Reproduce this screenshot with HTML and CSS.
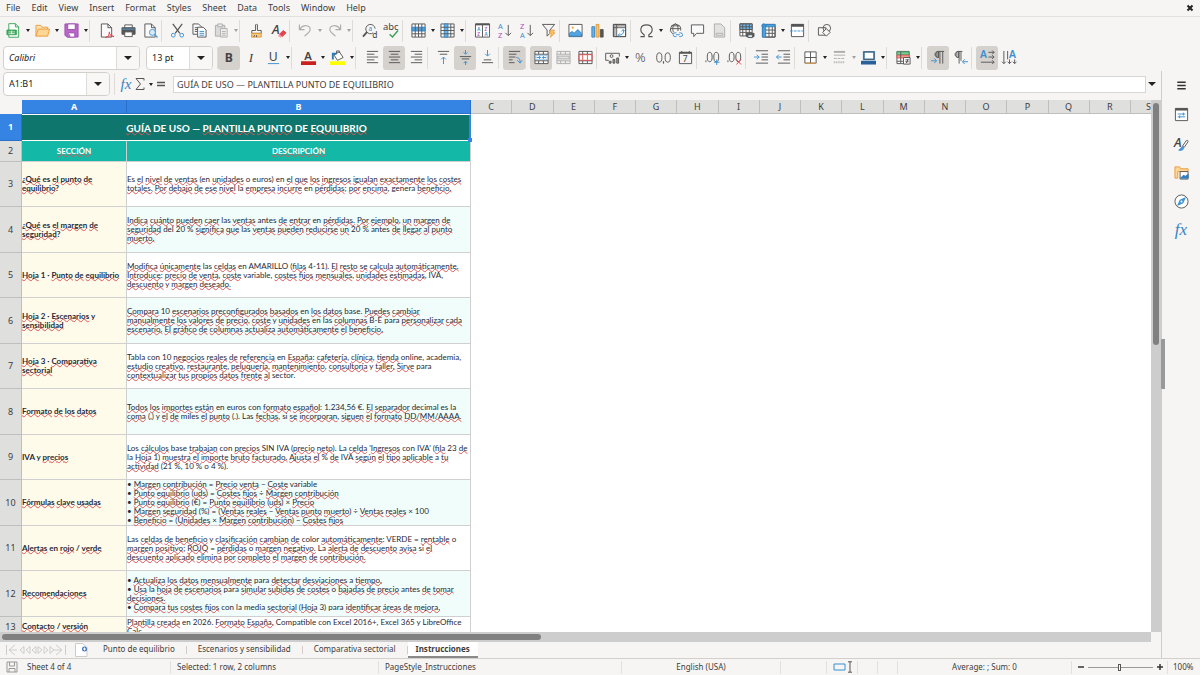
FILE: index.html
```html
<!DOCTYPE html>
<html lang="es">
<head>
<meta charset="utf-8">
<title>Punto de equilibrio</title>
<link rel="stylesheet" href="styles.css">
</head>
<body>
<nav class="menubar">
<button>File</button><button>Edit</button><button>View</button><button>Insert</button><button>Format</button><button>Styles</button><button>Sheet</button><button>Data</button><button>Tools</button><button>Window</button><button>Help</button>
<button class="close" aria-label="Close"><svg viewBox="0 0 8 8"><path d="M1.500 1.500l5 5M6.500 1.500l-5 5"/></svg></button>
</nav>

<div class="toolbar standard">
<button class="tb" aria-label="New"><svg viewBox="0 0 16 16" class="green"><path d="M3 .7h7l3.500 3.500v11H3z" fill="#fff"/><path d="M10 .7v3.500h3.500"/><path d="M1 7.500h10v5H1z" fill="#3aa657"/><path d="M2.500 9.500h7M2.500 11.300h7M6 8v4" stroke="#fff" stroke-width=".7"/></svg></button><button class="arrow" aria-label="New options"></button>
<button class="tb" aria-label="Open"><svg viewBox="0 0 16 16" class="orange"><path d="M1 14V2.500h5l1.500 2h6V7" fill="#fbe0b0"/><path d="M1 14L3.500 6.500h12L13.500 14z" fill="#fcd692"/></svg></button><button class="arrow" aria-label="Open options"></button>
<button class="tb" aria-label="Save"><svg viewBox="0 0 16 16" class="purple"><path d="M1 1h14v14H3l-2-2z" fill="#b968c7"/><path d="M4 1h8v6H4z" fill="#fff"/><path d="M4.500 10.500h7V15h-7z" fill="#fff"/><path d="M6 12v3"/></svg></button><button class="arrow" aria-label="Save options"></button>
<i class="sep"></i>
<button class="tb" aria-label="Export as PDF"><svg viewBox="0 0 16 16"><path d="M2.500 1h7l4 4v10h-11z" fill="#fafafa"/><path d="M9.500 1v4h4"/><path d="M7 15.500c3-1 4-3 4-6 0 3 2 4 5 5-4-1-6-1-9 1z" stroke="#e0434c"/></svg></button>
<button class="tb" aria-label="Print"><svg viewBox="0 0 16 16"><path d="M4 5V2h8v3" fill="#fff"/><path d="M1 5h14v7H1z" fill="#555"/><path d="M1.500 6.500h13" stroke="#55a0d8"/><path d="M4 9.500h8v5H4z" fill="#fff"/></svg></button>
<button class="tb" aria-label="Print Preview"><svg viewBox="0 0 16 16"><path d="M2 1h7l4 4v10H2z" fill="#fafafa"/><path d="M9 1v4h4"/><circle cx="10" cy="10" r="3.200" fill="#d7eaf8" stroke="#4a9ad4"/><path d="M12.300 12.300l3.200 3.200" stroke="#4a9ad4" stroke-width="1.500"/></svg></button>
<i class="sep"></i>
<button class="tb" aria-label="Cut"><svg viewBox="0 0 16 16"><path d="M3 1l7.500 10M13 1L5.500 11" stroke-width="1.300"/><circle cx="3.500" cy="13" r="2" class="blue"/><circle cx="12.500" cy="13" r="2" class="blue"/></svg></button>
<button class="tb" aria-label="Copy"><svg viewBox="0 0 16 16"><path d="M1 1h6l3 3v8H1z" fill="#fafafa"/><path d="M3 5h4M3 7h4M3 9h4"/><path d="M6 4.500h6l3 3V15H6z" fill="#fff"/><path d="M8 9h5M8 11h5M8 13h5" class="blue"/></svg></button>
<button class="tb off" aria-label="Paste"><svg viewBox="0 0 16 16"><path d="M1.500 2.500h10V14h-10z" fill="#bbb"/><path d="M4 1h5v3H4z" fill="#ddd"/><path d="M7 6h7v9H7z" fill="#eee"/><path d="M8.500 9h4M8.500 11h4M8.500 13h4"/></svg></button><button class="arrow off" aria-label="Paste options"></button>
<i class="sep"></i>
<button class="tb" aria-label="Clone Formatting"><svg viewBox="0 0 16 16"><path d="M7 8V2q1-2 2 0v6h4v3H3V8z" fill="#fafafa"/><path d="M3 11h10v4H2.500z" fill="#fcc77b" stroke="#e09a3b"/><path d="M5 15l1-2M8 15v-2"/></svg></button>
<button class="tb" aria-label="Clear Formatting"><svg viewBox="0 0 16 16"><text x="1" y="12" class="ital" font-size="14">A</text><path d="M9 12l4-4 3 2.500-4 4z" fill="#e8424a" stroke="#e8424a"/><path d="M8 13l3 2" stroke="#f3a0a0" stroke-width="2"/></svg></button>
<i class="sep"></i>
<button class="tb off" aria-label="Undo"><svg viewBox="0 0 16 16"><path d="M1.500 1.500V7H7M2 7c3-6 11-5 11 0 0 3-4 5-6 7" stroke-width="1.200"/></svg></button><button class="arrow off" aria-label="Undo history"></button>
<button class="tb off" aria-label="Redo"><svg viewBox="0 0 16 16"><path d="M14.500 1.500V7H9M14 7C11 1 3 2 3 7c0 3 4 5 6 7" stroke-width="1.200"/></svg></button><button class="arrow off" aria-label="Redo history"></button>
<i class="sep"></i>
<button class="tb" aria-label="Find and Replace"><svg viewBox="0 0 16 16"><path d="M12 10.500A5 5 0 1 1 14 6"/><path d="M5.500 9.500L1 14.500" stroke-width="2"/><text x="7" y="8" font-size="7" class="bt">a</text><text x="11" y="16" font-size="9">d</text></svg></button>
<button class="tb" aria-label="Spelling"><svg viewBox="0 0 16 16"><text x="-1" y="7" font-size="10">abc</text><path d="M6 12l3 3 6-7" stroke="#3ba05c" stroke-width="1.500"/></svg></button>
<i class="sep"></i>
<button class="tb" aria-label="Row"><svg viewBox="0 0 16 16"><path d="M1 1h14v14H1z" fill="#fff"/><path d="M1 4.500h14v4H1z" fill="#4da0dc" stroke="#3584c4"/><path d="M4.500 1v14M8 1v14M11.500 1v14M1 11.500h14"/></svg></button><button class="arrow" aria-label="Row options"></button>
<button class="tb" aria-label="Column"><svg viewBox="0 0 16 16"><path d="M1 1h14v14H1z" fill="#fff"/><path d="M4.500 1h4v14h-4z" fill="#6bb3e6" stroke="#3584c4"/><path d="M1 4.500h14M1 8h14M1 11.500h14M11.500 1v14"/></svg></button><button class="arrow" aria-label="Column options"></button>
<i class="sep"></i>
<button class="tb" aria-label="Sort"><svg viewBox="0 0 16 16"><path d="M.5 1h15v14H.5zM8 1v14" fill="#fff"/><path d="M.5 1.500h15" stroke-width="2"/><text x="2.500" y="8.200" font-size="5" font-weight="600" class="bt">A</text><text x="2.500" y="14" font-size="5" font-weight="600" class="pt">Z</text><text x="10" y="8.200" font-size="5" font-weight="600" class="pt">Z</text><text x="10" y="14" font-size="5" font-weight="600" class="bt">A</text></svg></button>
<button class="tb" aria-label="Sort Ascending"><svg viewBox="0 0 16 16"><text x="1" y="6.500" font-size="8" class="bt">A</text><text x="1" y="15.500" font-size="8" class="pt">Z</text><path d="M12 2v11M9 10.500l3 3 3-3"/></svg></button>
<button class="tb" aria-label="Sort Descending"><svg viewBox="0 0 16 16"><text x="1" y="6.500" font-size="8" class="pt">Z</text><text x="1" y="15.500" font-size="8" class="bt">A</text><path d="M12 2v11M9 10.500l3 3 3-3"/></svg></button>
<button class="tb" aria-label="AutoFilter"><svg viewBox="0 0 16 16"><path d="M1.500 1.500h13l-5 6V11l-3 3V7.500z"/><path d="M10.500 7.500h4l-1.500 3h2l-5 5 1-4h-2z" fill="#f8c060" stroke="#e8953a" stroke-width=".7"/></svg></button>
<i class="sep"></i>
<button class="tb" aria-label="Insert Image"><svg viewBox="0 0 16 16"><path d="M1 1.500h14v13H1z" fill="#fff"/><path d="M1.500 14v-3l3-2 2 2 4-4 4 4v3z" fill="#55a6e0" stroke="#3584c4"/><circle cx="5" cy="5" r="1.200" fill="#f2a83c" stroke="none"/></svg></button>
<button class="tb" aria-label="Insert Chart"><svg viewBox="0 0 16 16"><path d="M2 4h3v11H2z" fill="#6bb3e6" stroke="#3584c4"/><path d="M6.500 1.500h3V15h-3z" fill="#fbc168" stroke="#e09a3b"/><path d="M11 7h3v8h-3z" fill="#555"/></svg></button>
<button class="tb" aria-label="Insert Pivot Table"><svg viewBox="0 0 16 16"><path d="M1.500 1.500h13v13h-13z" fill="#fff"/><path d="M1.500 3h13M3 2v13" stroke-width="2" stroke="#aaa"/><path d="M1.500 1.500h13v13h-13zM5 1.500v13M1.500 5h13"/><path d="M7 13c4 0 6-2 5-6M10 9l2-2 2 2M8.500 11l-2 2 2 2" class="blue"/></svg></button>
<i class="sep"></i>
<button class="tb" aria-label="Special Character"><svg viewBox="0 0 16 16"><path d="M1.500 14.500h4v-2C0 9 1 2 8 2s8 7 2.500 10.500v2h4" stroke-width="1.200"/></svg></button><button class="arrow" aria-label="Recent characters"></button>
<button class="tb" aria-label="Hyperlink"><svg viewBox="0 0 16 16"><path d="M5 11.500A5.500 5.500 0 1 1 13.500 8M2.500 6h11M3.500 3h9M8 .6C4 3 5 8 6 10M8 .6c3 2 3 5 2.500 8"/><path d="M9 10.500H7.500a2 2 0 0 0 0 4H9M12 10.500h1.500a2 2 0 0 1 0 4H12M8.500 12.500h4" class="blue"/></svg></button>
<button class="tb" aria-label="Comment"><svg viewBox="0 0 16 16"><path d="M1.500 2h13v9H7l-3 3.500V11H1.500z" fill="#fafafa"/></svg></button>
<button class="tb off" aria-label="Headers and Footers"><svg viewBox="0 0 16 16"><path d="M2.500 1h7l4 4v10h-11z" fill="#ccc"/><path d="M4.500 11h7v2h-7z" fill="#eee"/></svg></button>
<i class="sep"></i>
<button class="tb" aria-label="Define Print Area"><svg viewBox="0 0 16 16"><path d="M1 .8h13v13H1z" fill="#fff"/><path d="M1 1h13v6H1z" fill="#6bb3e6"/><path d="M1 4h13M1 7h13M1 10h13M4 1v13M7.500 1v13M11 1v13"/><path d="M8 11h8v3.500H8z" fill="#555"/><path d="M9.500 12.500h5v3h-5z" fill="#d7eaf8"/></svg></button>
<button class="tb" aria-label="Freeze Rows and Columns"><svg viewBox="0 0 16 16"><path d="M1.500 1.500h13.500v13.500H1.500z" fill="#fff"/><path d="M1.500 1.500h3.500V15H1.500zM5 1.500h10V4H5z" fill="#4da0dc" stroke="#3584c4"/><path d="M5 7.500h10M5 11h10M8.500 4v11M12 4v11M15 4v11H5"/><path d="M3 0v6M0 3h6" class="blue"/></svg></button><button class="arrow" aria-label="Freeze options"></button>
<button class="tb" aria-label="Split Window"><svg viewBox="0 0 16 16"><path d="M1.500 1.500h13v13h-13z" fill="#fff"/><path d="M1.500 2.500h13" stroke-width="3"/><path d="M0 8.500h16" class="blue" stroke-dasharray="3 1"/></svg></button>
<i class="sep"></i>
<button class="tb" aria-label="Show Draw Functions"><svg viewBox="0 0 16 16"><path d="M1.500 5h8v8h-8z"/><circle cx="10.500" cy="5.500" r="4"/><path d="M10 6l4 4-4 4-4-4z" fill="#f6f5f4"/></svg></button>
</div>

<div class="toolbar formatting">
<div class="combo font"><input class="fontname" aria-label="Font Name" value="Calibri"><button class="open" aria-label="Choose font"></button></div>
<div class="combo size"><input aria-label="Font Size" value="13 pt"><button class="open" aria-label="Choose size"></button></div>
<i class="sep"></i>
<button class="tb on" aria-label="Bold"><svg viewBox="0 0 16 16"><text x="3" y="13" font-size="13" font-weight="700">B</text></svg></button>
<button class="tb" aria-label="Italic"><svg viewBox="0 0 16 16"><text x="5" y="13" font-size="14" class="serif">I</text></svg></button>
<button class="tb" aria-label="Underline"><svg viewBox="0 0 16 16"><text x="3" y="12" font-size="13">U</text><path d="M2 14.500h12" class="blue"/></svg></button><button class="arrow" aria-label="Underline options"></button>
<i class="sep"></i>
<button class="tb" aria-label="Font Color"><svg viewBox="0 0 16 16"><text x="3.500" y="10.500" font-size="12" font-weight="600">A</text><path d="M0 14h16" stroke="#c9211e" stroke-width="4"/></svg></button><button class="arrow" aria-label="Font color options"></button>
<button class="tb" aria-label="Background Color"><svg viewBox="0 0 16 16"><path d="M4 5l6-3 4 6-6 3z" fill="#fff"/><path d="M7 4V1h3v2"/><path d="M3 10V4h4" stroke="#2a7ab8" stroke-width="2"/><path d="M0 14h16" stroke="#ff0" stroke-width="4"/></svg></button><button class="arrow" aria-label="Background color options"></button>
<i class="sep"></i>
<button class="tb" aria-label="Align Left"><svg viewBox="0 0 16 16"><path d="M2 1.500h12M2 4.500h8M2 7.500h12M2 10.500h8M2 13.500h12"/></svg></button>
<button class="tb on" aria-label="Center"><svg viewBox="0 0 16 16"><path d="M2 1.500h12M4 4.500h8M2 7.500h12M4 10.500h8M2 13.500h12"/></svg></button>
<button class="tb" aria-label="Align Right"><svg viewBox="0 0 16 16"><path d="M2 1.500h12M6 4.500h8M2 7.500h12M6 10.500h8M2 13.500h12"/></svg></button>
<i class="sep"></i>
<button class="tb" aria-label="Align Top"><svg viewBox="0 0 16 16"><path d="M2 1.500h12M4 4.500h8"/><path d="M8 15V8M5.500 10L8 7.500l2.500 2.500" class="blue"/></svg></button>
<button class="tb on" aria-label="Center Vertically"><svg viewBox="0 0 16 16"><path d="M2 7h12M4 9.500h8"/><path d="M8 0v4M6 2.500l2 2 2-2M8 16v-4M6 14l2-2 2 2" class="blue"/></svg></button>
<button class="tb" aria-label="Align Bottom"><svg viewBox="0 0 16 16"><path d="M2 13.500h12M4 10.500h8"/><path d="M8 0v6M5.500 4L8 6.500 10.500 4" class="blue"/></svg></button>
<i class="sep"></i>
<button class="tb on" aria-label="Wrap Text"><svg viewBox="0 0 16 16"><path d="M2 1.500h12M2 4.500h8M2 7.500h7M2 10.500h4M2 13.500h6"/><path d="M10 8c3 0 4 2 4 5M11 11l3 3 2-3" class="blue"/></svg></button>
<i class="sep"></i>
<button class="tb on" aria-label="Merge and Center Cells"><svg viewBox="0 0 16 16"><path d="M1 1.500h14v13H1zM1 4.500h14M1 11.500h14M5 1.500v3M10 1.500v3M5 11.500v3M10 11.500v3" fill="#fff"/><path d="M2 6h12v4H2z" stroke="#9cc9ea"/><path d="M3 8h4M9 8h4M5.500 6.500L7 8 5.500 9.500M10.500 6.500L9 8l1.500 1.500" class="blue"/></svg></button>
<button class="tb off" aria-label="Merge Cells"><svg viewBox="0 0 16 16"><path d="M1 1.500h14v13H1zM1 4.500h14M1 11.500h14M5 1.500v3M10 1.500v3M5 11.500v3M10 11.500v3" fill="#eee"/><path d="M2 6.500h12v3H2z" fill="#ccc"/></svg></button>
<button class="tb" aria-label="Split Cells"><svg viewBox="0 0 16 16"><path d="M1 1.500h14v13H1zM1 4.500h14M1 11.500h14M5 1.500v3M10 1.500v3M5 11.500v3M10 11.500v3" fill="#fff"/><path d="M1 5h14v6H1zM5 5v6M10 5v6" stroke="#e05858"/></svg></button>
<i class="sep"></i>
<button class="tb" aria-label="Format as Currency"><svg viewBox="0 0 16 16"><path d="M4 11H.7V3.500h14.600V7"/><circle cx="7" cy="6.500" r="1.500"/><path d="M4.500 12h2v2h-2zM8.500 10h2v4h-2zM12.500 8.500h2V14h-2z" fill="#999"/></svg></button><button class="arrow" aria-label="Currency options"></button>
<button class="tb" aria-label="Format as Percent"><svg viewBox="0 0 16 16"><text x="1" y="13" font-size="14" font-weight="300">%</text></svg></button>
<button class="tb" aria-label="Format as Number"><svg viewBox="0 0 16 16"><ellipse cx="3.500" cy="8" rx="2.800" ry="5"/><ellipse cx="12.500" cy="8" rx="2.800" ry="5"/><path d="M8 12v2.500" stroke-width="1.300"/></svg></button>
<button class="tb" aria-label="Format as Date"><svg viewBox="0 0 16 16"><path d="M1.500 2.500h13v12h-13z"/><path d="M1.500 3h13" stroke-width="2"/><path d="M4 1v3M12 1v3"/><text x="5" y="13" font-size="9">7</text></svg></button>
<i class="sep"></i>
<button class="tb" aria-label="Add Decimal Place"><svg viewBox="0 0 16 16"><path d="M1 11v2"/><ellipse cx="5" cy="7.500" rx="2.600" ry="5"/><ellipse cx="12" cy="7.500" rx="2.600" ry="5"/><path d="M12.500 10v6M9.500 13h6" class="blue"/></svg></button>
<button class="tb" aria-label="Delete Decimal Place"><svg viewBox="0 0 16 16"><path d="M1 11v2"/><ellipse cx="5" cy="7.500" rx="2.600" ry="5"/><ellipse cx="12" cy="7.500" rx="2.600" ry="5"/><path d="M10 10l5 5.500M15 10l-5 5.500" stroke="#e8424a"/></svg></button>
<i class="sep"></i>
<button class="tb" aria-label="Increase Indent"><svg viewBox="0 0 16 16"><path d="M2 .8h13M8 4.500h7M8 7.500h7M8 10.500h7M2 14h13"/><path d="M0 7.500h5.500M3 5l2.500 2.500L3 10" class="blue"/></svg></button>
<button class="tb" aria-label="Decrease Indent"><svg viewBox="0 0 16 16"><path d="M2 .8h13M8 4.500h7M8 7.500h7M8 10.500h7M2 14h13"/><path d="M6 7.500H.5M3 5L.5 7.500 3 10" class="blue"/></svg></button>
<i class="sep"></i>
<button class="tb" aria-label="Borders"><svg viewBox="0 0 16 16"><path d="M2 2h12v12H2zM8 2v12M2 8h12" fill="#fff"/><path d="M2 14h12" stroke="#e09a3b"/></svg></button><button class="arrow" aria-label="Border options"></button>
<button class="tb off" aria-label="Border Style"><svg viewBox="0 0 16 16"><path d="M2 2h12" stroke-width="2"/><path d="M2 5.500h12"/><path d="M2 9h12" stroke-dasharray="3 1"/><path d="M2 13h12" stroke-dasharray="1 1" stroke-width="2"/></svg></button><button class="arrow off" aria-label="Border style options"></button>
<button class="tb" aria-label="Border Color"><svg viewBox="0 0 16 16"><path d="M3 2h11v8H3z" fill="#fff" stroke="#4a9ad4" stroke-width="2"/><path d="M3 2h11v8H3z"/><path d="M0 13.500h16" stroke="#2a6099" stroke-width="4"/></svg></button><button class="arrow" aria-label="Border color options"></button>
<i class="sep"></i>
<button class="tb" aria-label="Conditional"><svg viewBox="0 0 16 16"><path d="M1 1.500h13v13H1z" fill="#fff"/><path d="M1 2h13v3H1z" fill="#7ecb93" stroke="#3ba05c"/><path d="M1 5.500h13v3H1z" fill="#f39a8a" stroke="#e05858"/><path d="M1 12h7M5 2v12"/><path d="M8 8h7v7H8zM10 10.500h3.500M10 12.500h3.500M13 9.500l-2 4.500" fill="#fff"/></svg></button><button class="arrow" aria-label="Conditional options"></button>
<i class="sep"></i>
<button class="tb on" aria-label="Left-To-Right"><svg viewBox="0 0 16 16"><path d="M8 8C3 8 3 1.500 8 1.500h6M9.500 1.500v13M12.500 1.500v13"/><path d="M8 1.500v6.500C4 8 4 2 8 1.500z" fill="#999"/><path d="M0 11.500h5.500M3.500 9l2.500 2.500L3.500 14" class="blue"/></svg></button>
<button class="tb" aria-label="Right-To-Left"><svg viewBox="0 0 16 16"><path d="M6 8C1 8 1 1.500 6 1.500h4M6.500 1.500v13M8.500 1.500v10"/><path d="M6 1.500v6.500C2 8 2 2 6 1.500z" fill="#bbb"/><path d="M16 12.500h-5.500M12.500 10L10 12.500l2.500 2.500" class="blue"/></svg></button>
<i class="sep"></i>
<button class="tb on" aria-label="Text direction from left to right"><svg viewBox="0 0 16 16"><text x="0" y="9" font-size="11" font-weight="600" class="bt">A</text><path d="M9 2.500h6M13 .5l2 2-2 2M9 7.500h6M13 5.500l2 2-2 2M1 13h14M13 11l2 2-2 2"/></svg></button>
<button class="tb" aria-label="Text direction from top to bottom"><svg viewBox="0 0 16 16"><text x="7.500" y="9" font-size="11" font-weight="600" class="bt">A</text><path d="M2 1v13.500M0 12.500l2 2 2-2M8 10v4.500M6 12.500l2 2 2-2M13.500 10v4.500M11.500 12.500l2 2 2-2M6 1v9"/></svg></button>
</div>

<div class="workspace">
<main class="document">
<div class="formulabar">
<div class="combo namebox"><input aria-label="Name Box" value="A1:B1"><button class="open" aria-label="Choose range"></button></div>
<i class="sep"></i>
<button class="fb fx" aria-label="Function Wizard">fx</button>
<button class="fb" aria-label="Select Function"><svg viewBox="0 0 10 14"><path d="M9 3.500V1.500H1L5.500 7 1 12.500h8v-2"/></svg></button><button class="arrow" aria-label="Functions"></button>
<button class="fb" aria-label="Formula"><svg viewBox="0 0 10 14"><path d="M1 5.500h8M1 8.500h8" stroke-width="1.500"/></svg></button>
<input class="formula" aria-label="Input line" value="GUÍA DE USO — PLANTILLA PUNTO DE EQUILIBRIO">
<button class="expand" aria-label="Expand Formula Bar"></button>
</div>
<div class="gridarea">
<div class="sheet">
<table>
<colgroup><col class="c-num"><col class="c-a"><col class="c-b"><col span="16"><col class="c-last"></colgroup>
<thead><tr><td class="corner"></td><th class="sel">A</th><th class="sel">B</th><th>C</th><th>D</th><th>E</th><th>F</th><th>G</th><th>H</th><th>I</th><th>J</th><th>K</th><th>L</th><th>M</th><th>N</th><th>O</th><th>P</th><th>Q</th><th>R</th><th class="cut"><span>S</span></th></tr></thead>
<tbody>
<tr class="title"><th class="sel">1</th><td colspan="2" class="check">GUÍA DE USO — PLANTILLA PUNTO DE EQUILIBRIO<i class="cursor"></i></td></tr>
<tr class="heads"><th>2</th><td class="check">SECCIÓN</td><td class="check">DESCRIPCIÓN</td></tr>
<tr><th>3</th><td class="check">¿Qué es el punto de<br>equilibrio?</td><td class="check">Es el nivel de ventas (en unidades o euros) en el que los ingresos igualan exactamente los costes<br>totales. Por debajo de ese nivel la empresa incurre en pérdidas; por encima, genera beneficio.</td></tr>
<tr><th>4</th><td class="check">¿Qué es el margen de<br>seguridad?</td><td class="check">Indica cuánto pueden caer las ventas antes de entrar en pérdidas. Por ejemplo, un margen de<br>seguridad del 20 % significa que las ventas pueden reducirse un 20 % antes de llegar al punto<br>muerto.</td></tr>
<tr><th>5</th><td class="check">Hoja 1 · Punto de equilibrio</td><td class="check">Modifica únicamente las celdas en AMARILLO (filas 4-11). El resto se calcula automáticamente.<br>Introduce: precio de venta, coste variable, costes fijos mensuales, unidades estimadas, IVA,<br>descuento y margen deseado.</td></tr>
<tr><th>6</th><td class="check">Hoja 2 · Escenarios y<br>sensibilidad</td><td class="check">Compara 10 escenarios preconfigurados basados en los datos base. Puedes cambiar<br>manualmente los valores de precio, coste y unidades en las columnas B-E para personalizar cada<br>escenario. El gráfico de columnas actualiza automáticamente el beneficio.</td></tr>
<tr><th>7</th><td class="check">Hoja 3 · Comparativa<br>sectorial</td><td class="check">Tabla con 10 negocios reales de referencia en España: cafetería, clínica, tienda online, academia,<br>estudio creativo, restaurante, peluquería, mantenimiento, consultoría y taller. Sirve para<br>contextualizar tus propios datos frente al sector.</td></tr>
<tr><th>8</th><td class="check">Formato de los datos</td><td class="check">Todos los importes están en euros con formato español: 1.234,56 €. El separador decimal es la<br>coma (,) y el de miles el punto (.). Las fechas, si se incorporan, siguen el formato DD/MM/AAAA.</td></tr>
<tr><th>9</th><td class="check">IVA y precios</td><td class="check">Los cálculos base trabajan con precios SIN IVA (precio neto). La celda 'Ingresos con IVA' (fila 23 de<br>la Hoja 1) muestra el importe bruto facturado. Ajusta el % de IVA según el tipo aplicable a tu<br>actividad (21 %, 10 % o 4 %).</td></tr>
<tr><th>10</th><td class="check">Fórmulas clave usadas</td><td class="check">• Margen contribución = Precio venta − Coste variable<br>• Punto equilibrio (uds) = Costes fijos ÷ Margen contribución<br>• Punto equilibrio (€) = Punto equilibrio (uds) × Precio<br>• Margen seguridad (%) = (Ventas reales − Ventas punto muerto) ÷ Ventas reales × 100<br>• Beneficio = (Unidades × Margen contribución) − Costes fijos</td></tr>
<tr><th>11</th><td class="check">Alertas en rojo / verde</td><td class="check">Las celdas de beneficio y clasificación cambian de color automáticamente: VERDE = rentable o<br>margen positivo; ROJO = pérdidas o margen negativo. La alerta de descuento avisa si el<br>descuento aplicado elimina por completo el margen de contribución.</td></tr>
<tr><th>12</th><td class="check">Recomendaciones</td><td class="check">• Actualiza los datos mensualmente para detectar desviaciones a tiempo.<br>• Usa la hoja de escenarios para simular subidas de costes o bajadas de precio antes de tomar<br>decisiones.<br>• Compara tus costes fijos con la media sectorial (Hoja 3) para identificar áreas de mejora.</td></tr>
<tr class="last"><th>13</th><td class="check">Contacto / versión</td><td class="check">Plantilla creada en 2026. Formato España. Compatible con Excel 2016+, Excel 365 y LibreOffice<br>Calc.</td></tr>
</tbody>
</table>
</div>
<div class="vscroll"><i class="thumb"></i></div>
</div>
<div class="hscroll"><i class="thumb"></i></div>
<div class="tabs">
<button class="nav" aria-label="Move sheets"><svg viewBox="0 0 62 12"><path d="M1.500 1v10M10 1L4 6l6 5M5 6h7M19 2.500L15 6l4 3.500zM25 2.500L21 6l4 3.500zM31 2.500L27 6l4 3.500zM33 2.500L37 6l-4 3.500zM39 2.500L43 6l-4 3.500zM45 2.500L49 6l-4 3.500zM51 1l6 5-6 5M49 6h7M60.500 1v10"/></svg></button>
<button class="add" aria-label="Add Sheet"><svg viewBox="0 0 13 14"><path d="M.5.5H8l4 4v9H.5z" fill="#fff" stroke="#ccc"/><circle cx="9.500" cy="6" r="2.500" fill="#3d74bc" stroke="none"/><path d="M9.500 4.500v3M8 6h3" stroke="#fff"/></svg></button>
<button class="tab">Punto de equilibrio</button><i class="bar"></i><button class="tab">Escenarios y sensibilidad</button><i class="bar"></i><button class="tab">Comparativa sectorial</button><i class="bar"></i><button class="tab current">Instrucciones</button>
</div>
</main>
<aside class="sidebar">
<i class="grip"></i>
<button aria-label="Sidebar Settings"><svg viewBox="0 0 16 16"><path d="M3.500 4.500h9M3.500 8h9M3.500 11.500h9" stroke="#333" stroke-width="1.500"/></svg></button>
<button aria-label="Properties"><svg viewBox="0 0 16 16"><path d="M1.500 1.500h13v13h-13z" fill="#fff"/><path d="M1.500 2.500h13" stroke-width="2.500"/><path d="M4 7.500h8M4 10.500h8M10 6v3M6 9v3" class="blue"/></svg></button>
<button aria-label="Styles"><svg viewBox="0 0 16 16"><text x="0" y="12" font-size="14" class="ital">A</text><path d="M9 11l4-6q2-1 2 1l-4 6z" fill="#fff"/><path d="M5 15c2 0 2-4 5-3 1 2-1 4-5 3z" fill="#4a9ad4" class="blue"/></svg></button>
<button aria-label="Gallery"><svg viewBox="0 0 16 16"><path d="M1 14V2h5l1 2h8v3H4v7z" fill="#fcd692" stroke="#ed9b3c"/><path d="M6.500 7h8.500v8H6.500z" fill="#fff"/><path d="M7 14l3-3 2 1 3-2v4z" fill="#2f7ec0" stroke="#2f7ec0"/></svg></button>
<button aria-label="Navigator"><svg viewBox="0 0 16 16"><circle cx="8" cy="8" r="7" fill="#fff"/><path d="M12 4L9.500 9.500 4 12l2.500-5.500z" fill="#4a9ad4" class="blue"/><circle cx="8" cy="8" r="1" fill="#fff" stroke="none"/></svg></button>
<button class="fxbig" aria-label="Functions">fx</button>
</aside>
</div>

<footer class="status">
<span class="s-save"><svg viewBox="0 0 12 12"><path d="M1 1h10v10H1zM3.500 1v4h5V1M3 11V7.500h6V11" stroke="#999"/></svg></span>
<span class="s-sheet">Sheet 4 of 4</span><span class="s-sel">Selected: 1 row, 2 columns</span><span class="s-style">PageStyle_Instrucciones</span><span class="s-lang">English (USA)</span><span class="s-mode"></span><span class="s-ins"><svg viewBox="0 0 20 12"><path d="M1 3h11v6H1z" class="blue"/><path d="M15 .8h4M15 11.200h4M17 1v10"/></svg></span><span class="s-x"></span><span class="s-x"></span><span class="s-sum">Average: ; Sum: 0</span>
<span class="s-zoom"><button aria-label="Zoom Out"><svg viewBox="0 0 8 8"><path d="M1 4h6" stroke="#333" stroke-width="1.500"/></svg></button><input type="range" aria-label="Zoom" min="0" max="100" value="49"><button aria-label="Zoom In"><svg viewBox="0 0 8 8"><path d="M1 4h6M4 1v6" stroke="#333" stroke-width="1.500"/></svg></button></span><span class="s-pct">100%</span>
</footer>
<script src="spelling.js"></script>
</body>
</html>
```
FILE: styles.css
```css
* { box-sizing: border-box; }
body {
  margin: 0;
  height: 100vh;
  display: flex;
  flex-direction: column;
  overflow: hidden;
  background: #f6f5f4;
  color: #3d3d3d;
  font: 9px/12px "Noto Sans", sans-serif;
}
button, input { font: inherit; color: inherit; margin: 0; padding: 0; border: 0; background: none; min-width: 0; }
button { display: flex; align-items: center; justify-content: center; flex: none; }
svg { width: 16px; height: 16px; display: block; overflow: visible; fill: none; stroke: #555; stroke-width: 1; }
svg text { fill: #444; stroke: none; font-family: "Noto Sans", sans-serif; }
svg .ital { font-style: italic; font-weight: 500; }
svg .serif { font-family: "Liberation Serif", serif; font-style: italic; }
svg .bt { fill: #3a8fd0; }
svg .pt { fill: #a94fc0; }
svg .blue { stroke: #3a8fd0; }
svg.green { stroke: #3aa657; }
svg.orange { stroke: #ed9b3c; }
svg.purple { stroke: #9c4bb0; }

.menubar { display: flex; height: 17px; flex: none; gap: 11px; padding: 0 6px; border-bottom: 1px solid #e3e1df; }
.close { margin-left: auto; }
.close svg { width: 8px; height: 8px; stroke: #222; stroke-width: 2; }

.toolbar { display: flex; align-items: center; flex: none; height: 27px; padding-left: 2px; }
.toolbar svg { width: 15px; height: 15px; }
.tb { width: 22px; height: 24px; border-radius: 3px; }
.tb.on { background: #d5d1cd; }
.tb.off { opacity: .45; }
.formatting { padding-left: 3px; }
.arrow { width: 7px; height: 24px; }
.arrow::before, .open::before, .expand::before { content: ""; border: 2px solid transparent; border-top: 3px solid #222; border-bottom: 0; }
.open::before, .expand::before { border-width: 4px 4px 0; }
.arrow.off { opacity: .4; }
.sep { flex: none; width: 5px; height: 22px; border-left: 1px solid #dedcd9; }
.arrow + .sep { width: 6px; }
.combo { display: flex; flex: none; height: 24px; background: #fff; border: 1px solid #d3cfcb; border-radius: 4px; overflow: hidden; }
.combo input { flex: 1; padding-left: 5px; color: #222; }
.combo .open { width: 23px; background: #f8f7f6; border-left: 1px solid #dedcd9; }
.font { width: 137px; margin-right: 6px; }
.font input { font-style: italic; }
.size { width: 67px; margin-right: 4px; }
.size + .sep { width: 1px; }

.workspace { display: flex; flex: 1; min-height: 0; }
.document { display: flex; flex-direction: column; flex: 1; min-width: 0; border-right: 1px solid #cfccc9; }
.formulabar { display: flex; align-items: center; flex: none; height: 29px; padding: 0 3px 3px; }
.namebox { width: 107px; margin-right: 4px; }
.fb { width: 14px; height: 22px; }
.fb svg { width: 10px; height: 14px; }
.fx { font: italic 15px/16px "Liberation Serif", serif; color: #3584c4; }
.formula { flex: 1; height: 17px; margin-left: 5px; padding-left: 3px; background: #fff; border: 1px solid #d8d5d2; }
.expand { width: 12px; height: 20px; }

.gridarea { display: flex; flex: 1; min-height: 0; }
.sheet { flex: 1; min-width: 0; overflow: hidden; background: #fff; }
table { width: 100%; table-layout: fixed; border-collapse: separate; border-spacing: 0; }
.c-num { width: 22px; }
.c-a { width: 105px; }
.c-b { width: 344px; }
.c-last { width: 20px; }
th, td { padding: 0; white-space: nowrap; }
th { font-weight: 400; background: #dfdfde; border-right: 1px solid #c0bfbe; border-bottom: 1px solid #c0bfbe; text-align: center; }
thead th { height: 14px; }
thead .cut { text-align: right; border-right: 0; }
.corner { background: #f6f5f4; }
th.sel { background: #3584e4; color: #fff; font-weight: 700; border-color: #2a70c8; }
tbody td { height: 45px; vertical-align: middle; font: 8px/9px Lato, sans-serif; color: #1f2937; border-right: 1px solid #d0d0d0; border-bottom: 1px solid #d0d0d0; }
tbody tr:nth-child(even) td { height: 46px; background: #f0fdfa; }
tbody td:nth-child(2) { font-weight: 700; }
tbody tr td:nth-child(2), tbody tr:nth-child(even) td:nth-child(2) { background: #fffbeb; }
tbody tr.title td:nth-child(2) { position: relative; height: 27px; background: #0f766e; color: #fff; font-size: 10px; line-height: 12px; text-align: center; border: 0; }
tbody tr.heads td, tbody tr.heads td:nth-child(2) { height: 21px; background: #14b8a6; color: #fff; font-weight: 700; text-align: center; }
tbody tr.last td { height: 20px; }
.cursor { position: absolute; inset: 0; border: 1px solid #fff; border-left: 0; border-right: 2px solid #3584e4; }
.cursor::after { content: ""; position: absolute; right: -3px; bottom: -2px; width: 4px; height: 4px; background: #3584e4; }
.miss { text-decoration: underline wavy #e05555 1px; text-underline-offset: -1px; text-decoration-skip-ink: none; }

.vscroll { width: 10px; flex: none; padding: 3px 2px; background: #cdcdcd; }
.thumb { display: block; background: #808080; border-radius: 3px; }
.vscroll .thumb { height: 46%; }
.hscroll { flex: none; height: 10px; margin-right: 10px; padding: 2px; background: #cdcdcd; }
.hscroll .thumb { height: 6px; width: 47%; }
.tabs { display: flex; align-items: center; flex: none; height: 16px; padding-left: 5px; font-size: 8px; }
.nav svg { width: 62px; height: 12px; stroke: #cfccc9; }
.add { margin: 0 4px 0 8px; }
.add svg { width: 13px; height: 14px; }
.tab { height: 16px; padding: 0 11px; border-bottom: 2px solid transparent; }
.bar { width: 1px; height: 8px; background: #d0cdca; }
.current { font-weight: 700; padding: 0 8px; background: #fff; border-color: #8a8a8a; }

.sidebar { position: relative; flex: none; width: 38px; display: flex; flex-direction: column; align-items: center; gap: 5px; padding-top: 2px; }
.sidebar button { width: 24px; height: 24px; }
.sidebar svg { width: 15px; height: 15px; }
.sidebar .fxbig { font: italic 17px/20px "Liberation Serif", serif; color: #3584c4; }
.grip { position: absolute; left: -1px; top: 50%; margin-top: -26px; width: 4px; height: 50px; background: #999; }

.status { display: flex; flex: none; height: 17px; align-items: center; border-top: 1px solid #d3cfcb; font-size: 8px; }
.status > span { height: 13px; border-left: 1px solid #e3e1df; }
.status > .s-save { width: 22px; padding-left: 6px; border: 0; }
.s-save svg { width: 12px; height: 12px; }
.status > .s-sheet { width: 148px; padding-left: 5px; border: 0; }
.s-sel { width: 208px; padding-left: 6px; }
.s-style { width: 243px; padding-left: 6px; }
.s-lang { flex: 1; text-align: center; }
.s-mode { width: 46px; }
.s-ins { width: 31px; padding-left: 6px; }
.s-ins svg { width: 20px; height: 12px; }
.s-x { width: 20px; }
.s-sum { width: 174px; text-align: center; }
.s-zoom { display: flex; align-items: center; gap: 3px; width: 96px; padding: 0 3px 0 5px; }
.s-zoom svg { width: 8px; height: 8px; }
.s-pct { width: 33px; padding-left: 5px; }
input[type=range] { appearance: none; flex: 1; height: 12px; }
input[type=range]::-webkit-slider-runnable-track { height: 1px; background: #999; }
input[type=range]::-webkit-slider-thumb { appearance: none; width: 3px; height: 7px; margin-top: -3px; border: 1px solid #555; background: #fff; }
```
FILE: spelling.js
```js
// Underlines the words that the English dictionary does not know.
const known = new Set(('DE USO Es es en la las Las Los La a o y con antes variable euros color Compatible Excel ' +
  'LibreOffice Calc VERDE IVA SIN AMARILLO sector Tabla media para del genera base decimal miles online academia ' +
  'si B E').split(' '));

function mark(node) {
  const out = document.createDocumentFragment();
  for (const part of node.data.split(/([\p{L}][\p{L}/]*\.?)/u)) {
    const word = part.replace(/\.$/, '');
    if (!/^\p{L}/u.test(word) || known.has(word)) {
      out.append(part);
    } else {
      const span = document.createElement('span');
      span.className = 'miss';
      span.textContent = part;
      out.append(span);
    }
  }
  node.replaceWith(out);
}

for (const cell of document.querySelectorAll('.check')) {
  for (const node of [...cell.childNodes]) {
    if (node.nodeType === Node.TEXT_NODE) mark(node);
  }
}
```
